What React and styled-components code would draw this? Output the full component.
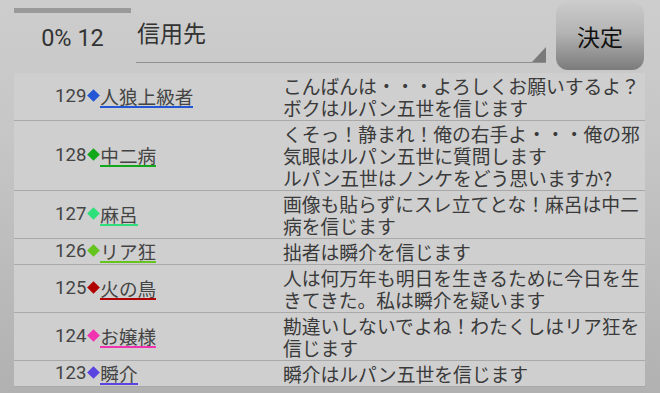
import React from "react";
import styled, { createGlobalStyle } from "styled-components";

const Global = createGlobalStyle`
  html, body { margin: 0; padding: 0; }
  body {
    width: 660px;
    height: 393px;
    overflow: hidden;
    background: linear-gradient(180deg, #cdcdcd 0%, #c6c6c6 35%, #b1b1b1 100%);
    font-family: Roboto, "Noto Sans CJK JP", sans-serif;
    color: #333;
  }
`;

const Page = styled.div`
  display: flex;
  flex-direction: column;
  width: 660px;
  height: 393px;
`;

const Header = styled.div`
  display: flex;
  align-items: flex-start;
  height: 73px;
  flex: none;
  padding: 0 16px 0 14px;
  box-sizing: border-box;
`;

const Progress = styled.div`
  width: 117px;
  display: flex;
  flex-direction: column;
  align-items: center;
`;

const Bar = styled.div`
  margin-top: 8px;
  width: 100%;
  height: 5px;
  background: #9a9a9a;
`;

const Percent = styled.div`
  margin-top: 11px;
  font-size: 23.5px;
  line-height: 28px;
  color: #333;
`;

const Select = styled.div`
  position: relative;
  margin-left: 5px;
  width: 410px;
  height: 63px;
  box-sizing: border-box;
  border-bottom: 1.5px solid #8f8f8f;
  padding: 18px 0 0 1px;
  font-family: "Noto Sans CJK JP", sans-serif;
  font-size: 23px;
  line-height: 28px;
  color: #333;
`;

const Corner = styled.div`
  position: absolute;
  right: 0;
  bottom: 0;
  width: 14px;
  height: 15px;
  background: #7a7a7a;
  clip-path: polygon(100% 0, 100% 100%, 0 100%);
`;

const Button = styled.button`
  margin: 2px 0 0 10px;
  width: 88px;
  height: 68px;
  border: none;
  border-radius: 12px;
  background: linear-gradient(180deg, #cbcbcb 0%, #b4b4b4 45%, #7b7b7b 100%);
  font-family: "Noto Sans CJK JP", sans-serif;
  font-size: 23px;
  color: #111;
  padding: 0;
`;

const List = styled.div`
  margin-left: 14px;
  width: 631px;
  display: flex;
  flex-direction: column;
`;

const Row = styled.div`
  display: grid;
  grid-template-columns: 269px 1fr;
  align-items: center;
  background: #cfcfcf;
  border-bottom: 1.5px solid #a9a9a9;
  padding: 1.5px 0;
`;

const Who = styled.div`
  padding-left: 41px;
  display: flex;
  align-items: center;
  font-size: 18.6px;
  color: #444;
`;

const Num = styled.span`
  line-height: 20px;
  padding-bottom: 2px;
`;

const Diamond = styled.span`
  display: inline-block;
  width: 9px;
  height: 9px;
  margin: 0 2px 2px 3px;
  background: ${(p) => p.$c};
  transform: rotate(45deg);
`;

const Name = styled.span`
  font-family: "Noto Sans CJK JP", sans-serif;
  border-bottom: 2px solid ${(p) => p.$c};
  line-height: 20px;
`;

const Msg = styled.div`
  font-family: "Noto Sans CJK JP", sans-serif;
  font-size: 18.8px;
  line-height: 22px;
  color: #3a3a3a;
  white-space: nowrap;
`;

const rows = [
  { n: 129, name: "人狼上級者", c: "#2457d6", lines: ["こんばんは・・・よろしくお願いするよ？", "ボクはルパン五世を信じます"] },
  { n: 128, name: "中二病", c: "#12a81a", lines: ["くそっ！静まれ！俺の右手よ・・・俺の邪", "気眼はルパン五世に質問します", "ルパン五世はノンケをどう思いますか?"] },
  { n: 127, name: "麻呂", c: "#2fe07a", lines: ["画像も貼らずにスレ立てとな！麻呂は中二", "病を信じます"] },
  { n: 126, name: "リア狂", c: "#66c41e", lines: ["拙者は瞬介を信じます"] },
  { n: 125, name: "火の鳥", c: "#b00000", lines: ["人は何万年も明日を生きるために今日を生", "きてきた。私は瞬介を疑います"] },
  { n: 124, name: "お嬢様", c: "#f233b0", lines: ["勘違いしないでよね！わたくしはリア狂を", "信じます"] },
  { n: 123, name: "瞬介", c: "#5a44e0", lines: ["瞬介はルパン五世を信じます"] },
];

export default function App() {
  return (
    <Page>
      <Global />
      <Header>
        <Progress>
          <Bar />
          <Percent>0% 12</Percent>
        </Progress>
        <Select>
          信用先
          <Corner />
        </Select>
        <Button>決定</Button>
      </Header>
      <List>
        {rows.map((r) => (
          <Row key={r.n}>
            <Who>
              <Num>{r.n}</Num>
              <Diamond $c={r.c} />
              <Name $c={r.c}>{r.name}</Name>
            </Who>
            <Msg>
              {r.lines.map((l, i) => (
                <div key={i}>{l}</div>
              ))}
            </Msg>
          </Row>
        ))}
      </List>
    </Page>
  );
}
